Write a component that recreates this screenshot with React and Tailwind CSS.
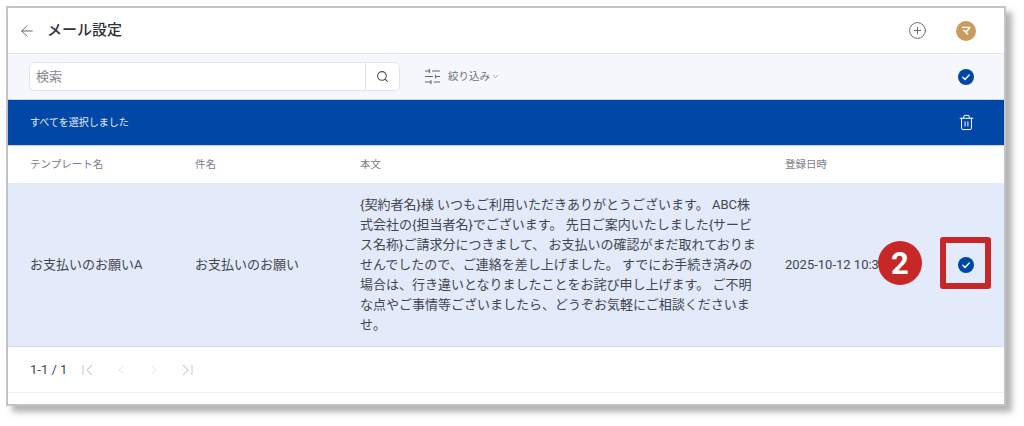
import React from "react";
import { ArrowLeft, CirclePlus, Search, SlidersHorizontal, ChevronDown, Trash2, ChevronLeft, ChevronRight } from "lucide-react";

const font = { fontFamily: '"Roboto", "Noto Sans CJK JP", sans-serif' };

function CheckCircle({ size }) {
    return (
        <svg width={size} height={size} viewBox="0 0 16 16">
            <circle cx="8" cy="8" r="8" fill="#0047a6" />
            <path d="M4.8 8.3l2.2 2.1 4.2-4.4" fill="none" stroke="white" strokeWidth="1.4" strokeLinecap="round" strokeLinejoin="round" />
        </svg>
    );
}

function PagerFirst() {
    return (
        <svg width="14" height="14" viewBox="0 0 14 14" fill="none" stroke="#cfd1d9" strokeWidth="1.2">
            <path d="M2 2v10M11 2L6 7l5 5" />
        </svg>
    );
}

function PagerLast() {
    return (
        <svg width="14" height="14" viewBox="0 0 14 14" fill="none" stroke="#cfd1d9" strokeWidth="1.2">
            <path d="M12 2v10M3 2l5 5-5 5" />
        </svg>
    );
}

export default function App() {
    return (
        <div className="h-[426px] w-[1024px] overflow-hidden bg-white pl-[6px] pt-[6px]" style={font}>
            <div className="relative h-[400px] w-[1000px] border-2 border-[#c4c4c4] bg-white shadow-[6px_6px_6px_rgba(0,0,0,0.3)]">
                {/* header */}
                <div className="flex h-[46px] items-center border-b border-[#e4e6ee] pl-[10px]">
                    <ArrowLeft size={18} strokeWidth={1.3} className="text-[#5f6470]" />
                    <h1 className="ml-[11px] text-[15px] font-medium text-[#30333a]">メール設定</h1>
                    <CirclePlus size={19} strokeWidth={1.2} className="ml-auto text-[#5f6470]" />
                    <div className="ml-[29px] mr-[28px] flex h-5 w-5 items-center justify-center rounded-full bg-[#c99b5f] text-[10px] font-bold text-white">マ</div>
                </div>

                {/* search */}
                <div className="flex h-[46px] items-center border-b border-[#c9d3e6] bg-[#f6f7fc] pl-[21px]">
                    <div className="flex h-[29px] w-[371px] items-center rounded-md border border-[#e2e4ec] bg-white">
                        <span className="flex-1 pl-[6px] text-[13px] text-[#85888f]">検索</span>
                        <div className="flex h-full w-[34px] items-center justify-center border-l border-[#e2e4ec]">
                            <Search size={13} strokeWidth={2} className="text-[#4c5059]" />
                        </div>
                    </div>
                    <SlidersHorizontal size={19} strokeWidth={1.3} className="ml-[23px] rotate-180 text-[#5f6470]" />
                    <span className="ml-[6px] text-[10.5px] text-[#6d7079]">絞り込み</span>
                    <ChevronDown size={9} className="ml-[1px] text-[#8a8d95]" />
                    <div className="ml-auto mr-[30px]"><CheckCircle size={16} /></div>
                </div>

                {/* selected bar */}
                <div className="flex h-[46px] items-center border-b border-[#c9d3e6] bg-[#0047a6] pl-[22px]">
                    <span className="text-[10px] text-[#e6edf7]">すべてを選択しました</span>
                    <Trash2 size={17} strokeWidth={1.4} className="ml-auto mr-[29px] text-white" />
                </div>

                {/* table head */}
                <div className="grid h-[37px] grid-cols-[165px_165px_425px_1fr] items-center pl-[22px] text-[10.5px] text-[#7b7e86]">
                    <span>テンプレート名</span>
                    <span>件名</span>
                    <span>本文</span>
                    <span>登録日時</span>
                </div>

                {/* row */}
                <div className="grid h-[164px] grid-cols-[165px_165px_425px_1fr] items-center border-b border-[#d6def0] bg-[#e3eafa] pl-[22px] text-[#43464e]">
                    <span className="text-[13px]">お支払いのお願いA</span>
                    <span className="text-[13px]">お支払いのお願い</span>
                    <p className="w-[401px] text-[13px] leading-[20px]">
                        {"{契約者名}様 いつもご利用いただきありがとうございます。 ABC株式会社の{担当者名}でございます。 先日ご案内いたしました{サービス名称}ご請求分につきまして、 お支払いの確認がまだ取れておりませんでしたので、ご連絡を差し上げました。 すでにお手続き済みの場合は、行き違いとなりましたことをお詫び申し上げます。 ご不明な点やご事情等ございましたら、どうぞお気軽にご相談くださいませ。"}
                    </p>
                    <div className="flex items-center justify-between">
                        <span className="text-[13px]">2025-10-12 10:30</span>
                        <div className="mr-[30px]"><CheckCircle size={16} /></div>
                    </div>
                </div>

                {/* pagination */}
                <div className="flex h-[46px] items-center border-b border-[#eceef3] pl-[22px]">
                    <span className="w-[51px] text-[13px] text-[#43464e]">1-1 / 1</span>
                    <div className="flex items-center gap-[19px]">
                        <PagerFirst />
                        <ChevronLeft size={14} strokeWidth={1.2} className="text-[#cfd1d9]" />
                        <ChevronRight size={14} strokeWidth={1.2} className="text-[#cfd1d9]" />
                        <PagerLast />
                    </div>
                </div>

                {/* annotation */}
                <div className="absolute left-[870px] top-[233px] flex h-[44px] w-[44px] items-center justify-center rounded-full bg-[#c62828] text-[31px] font-bold leading-none text-white">2</div>
                <div className="absolute left-[932px] top-[229px] h-[52px] w-[51px] rounded-[3px] border-[6px] border-[#c62828]" />
            </div>
        </div>
    );
}
